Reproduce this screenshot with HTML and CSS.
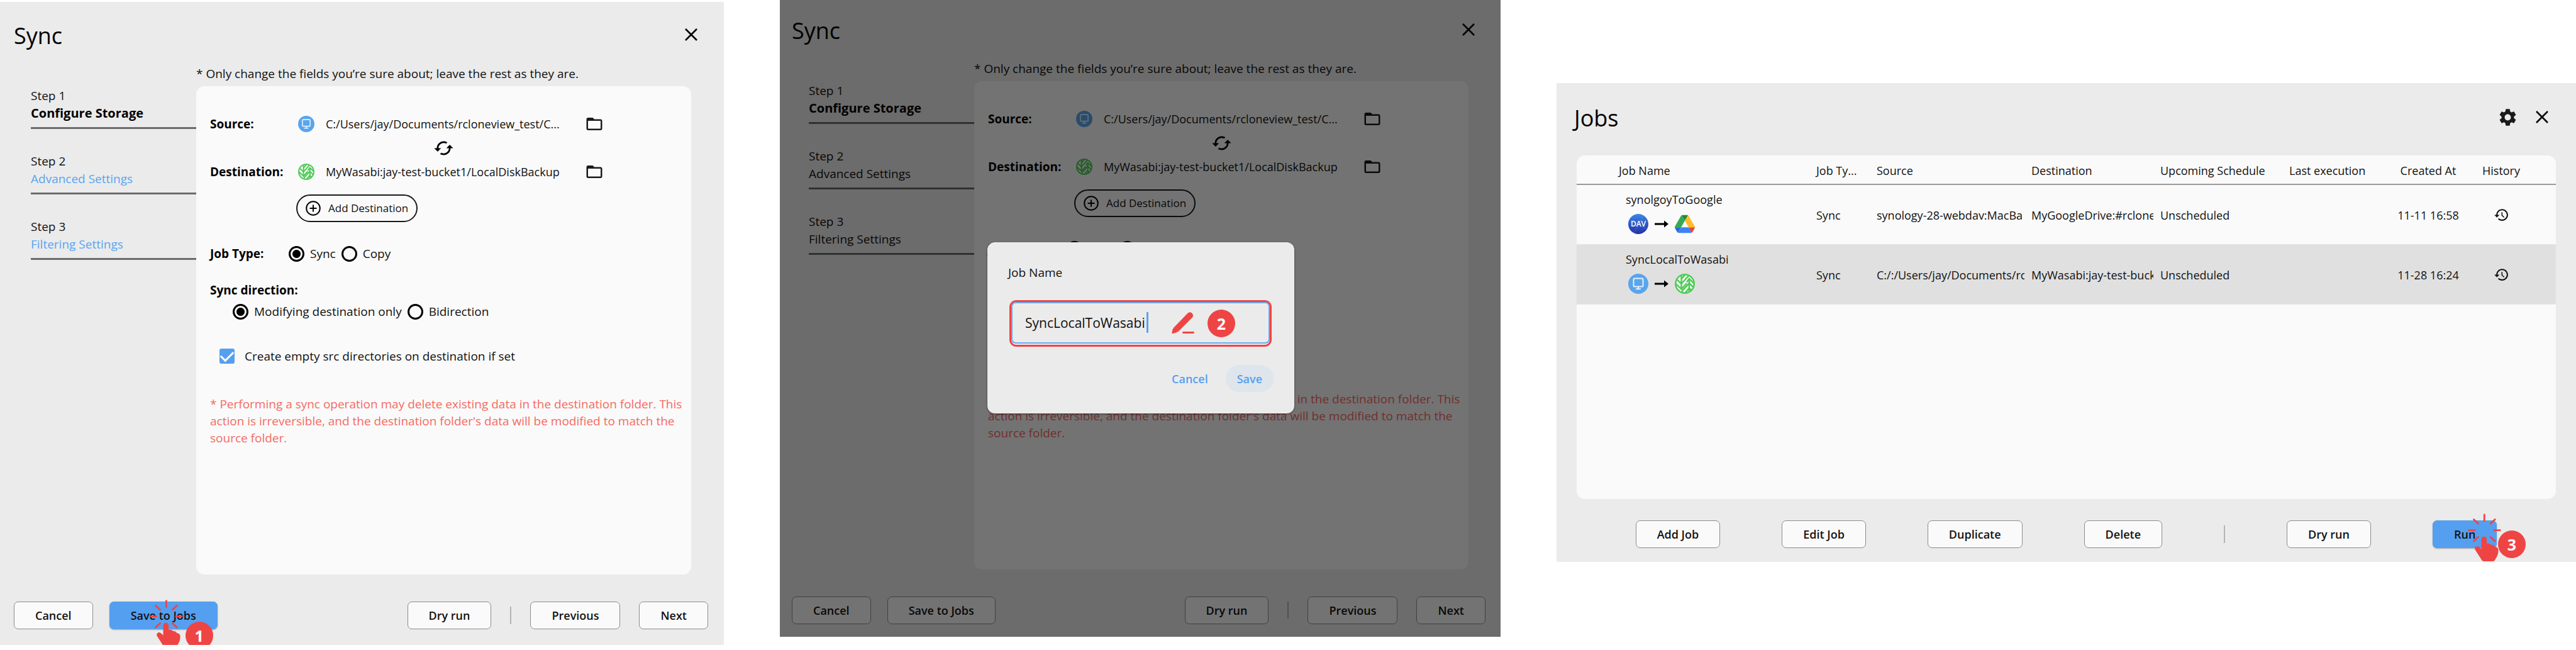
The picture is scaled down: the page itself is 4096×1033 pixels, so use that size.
FILE: index.html
```html
<!DOCTYPE html>
<html lang="en">
<head>
<meta charset="utf-8">
<title>Save and run a sync job</title>
<link rel="stylesheet" href="styles.css">
</head>
<body>
<svg class="sprite" aria-hidden="true">
  <defs>
    <linearGradient id="dav-fill" x1="0" y1="0" x2="0" y2="1">
      <stop offset="0" stop-color="#3f86e6"/>
      <stop offset="0.5" stop-color="#2b59c8"/>
      <stop offset="1" stop-color="#2a2fa8"/>
    </linearGradient>
    <clipPath id="leaf-clip"><circle cx="16" cy="16" r="14"/></clipPath>
  </defs>
  <symbol id="i-close" viewBox="0 0 20 20"><path d="M1 1l18 18M19 1L1 19" fill="none" stroke="#000" stroke-width="2.6"/></symbol>
  <symbol id="i-folder" viewBox="2 4 20 16"><path d="M20 6h-8l-2-2H4c-1.1 0-1.99.9-1.99 2L2 18c0 1.1.9 2 2 2h16c1.1 0 2-.9 2-2V8c0-1.1-.9-2-2-2zm0 12H4V8h16v10z" fill="#1a1a1a"/></symbol>
  <symbol id="i-swap" viewBox="0 0 24 24"><path d="M19 8l-4 4h3c0 3.31-2.69 6-6 6-1.01 0-1.97-.25-2.8-.7l-1.46 1.46C8.97 19.54 10.43 20 12 20c4.42 0 8-3.58 8-8h3l-4-4zM6 12c0-3.31 2.69-6 6-6 1.01 0 1.97.25 2.8.7l1.46-1.46C15.03 4.46 13.57 4 12 4c-4.42 0-8 3.58-8 8H1l4 4 4-4H6z"/></symbol>
  <symbol id="i-plus" viewBox="0 0 24 24"><g fill="none" stroke="#000" stroke-width="2"><circle cx="12" cy="12" r="10.8"/><path d="M12 6.500v11M6.500 12h11"/></g></symbol>
  <symbol id="i-computer" viewBox="0 0 32 32"><circle cx="16" cy="16" r="16" fill="#58a5ec"/><rect x="8.500" y="7.500" width="15" height="13" rx="1.500" fill="none" stroke="#e6f1fc" stroke-width="2"/><path d="M16 21v3M12 24.300h8" stroke="#e6f1fc" stroke-width="2" fill="none"/></symbol>
  <symbol id="i-wasabi" viewBox="0 0 32 32">
    <circle cx="16" cy="16" r="16" fill="#4fcb57"/>
    <g clip-path="url(#leaf-clip)">
      <circle cx="16" cy="16" r="13.500" fill="#fff"/>
      <g fill="none" stroke="#4fcb57" stroke-width="2.600">
        <path d="M10.500 1v24"/><path d="M1 7l9.500 9L24 1"/><path d="M1 15.500l9.500 9L19 15"/>
        <path d="M23 8v24"/><path d="M12 32V27l11-12 8 8"/><path d="M15 32l8-9 7 7"/><path d="M19 13.500l4-5.500 8 8"/><path d="M10.500 8.500L17 1M1 22l9 9"/>
      </g>
    </g>
  </symbol>
  <symbol id="i-drive" viewBox="0 0 87.300 78">
    <path d="m6.600 66.850 3.850 6.650c.8 1.400 1.950 2.500 3.300 3.300l13.750-23.800h-27.500c0 1.550.4 3.100 1.200 4.500z" fill="#2468dc"/>
    <path d="m43.650 25-13.750-23.800c-1.350.8-2.500 1.900-3.300 3.300l-25.400 44a9.060 9.060 0 0 0-1.200 4.500h27.500z" fill="#36a852"/>
    <path d="m73.550 76.800c1.350-.8 2.500-1.900 3.300-3.300l1.600-2.750 7.650-13.250c.8-1.400 1.200-2.950 1.200-4.500h-27.500l5.850 11.500z" fill="#ea4335"/>
    <path d="m43.650 25 13.750-23.800c-1.350-.8-2.900-1.200-4.500-1.200h-18.500c-1.600 0-3.150.45-4.500 1.200z" fill="#218a38"/>
    <path d="m59.800 53h-32.300l-13.750 23.800c1.350.8 2.900 1.200 4.500 1.200h50.800c1.600 0 3.150-.45 4.500-1.200z" fill="#3b82f6"/>
    <path d="m73.400 26.500-12.700-22c-.8-1.400-1.950-2.500-3.300-3.300l-13.750 23.800 16.150 28h27.450c0-1.550-.4-3.100-1.200-4.500z" fill="#fcbc2c"/>
  </symbol>
  <symbol id="i-arrow" viewBox="0 0 22 12"><path d="M0 6h16" stroke="#000" stroke-width="3" fill="none"/><path d="M15 .5L22 6l-7 5.500z"/></symbol>
  <symbol id="i-gear" viewBox="0 0 24 24"><path fill="#1a1a1a" d="M19.140 12.940c.04-.3.060-.61.060-.94 0-.32-.02-.64-.07-.94l2.030-1.580c.18-.14.23-.41.12-.61l-1.920-3.320c-.12-.22-.37-.29-.59-.22l-2.390.96c-.5-.38-1.030-.7-1.620-.94L14.400 2.810c-.04-.24-.24-.41-.48-.41h-3.840c-.24 0-.43.17-.47.41L9.250 5.350C8.660 5.590 8.120 5.920 7.630 6.290L5.240 5.330c-.22-.08-.47 0-.59.22L2.740 8.870c-.12.21-.08.47.12.61l2.030 1.580C4.840 11.360 4.800 11.690 4.800 12s.02.64.07.94l-2.030 1.580c-.18.14-.23.41-.12.61l1.920 3.320c.12.22.37.29.59.22l2.390-.96c.5.38 1.030.7 1.620.94l.36 2.540c.05.24.24.41.48.41h3.840c.24 0 .44-.17.47-.41l.36-2.540c.59-.24 1.130-.56 1.620-.94l2.390.96c.22.08.47 0 .59-.22l1.920-3.320c.12-.22.07-.47-.12-.61L19.140 12.940zM12 15.600c-1.980 0-3.600-1.620-3.600-3.600s1.620-3.600 3.600-3.600 3.600 1.620 3.600 3.600-1.620 3.600-3.600 3.600z"/></symbol>
  <symbol id="i-history" viewBox="0 0 24 24"><path d="M13 3c-4.970 0-9 4.030-9 9H1l3.890 3.890.07.14L9 12H6c0-3.870 3.130-7 7-7s7 3.130 7 7-3.130 7-7 7c-1.930 0-3.680-.79-4.940-2.060l-1.420 1.420C8.270 19.990 10.510 21 13 21c4.970 0 9-4.030 9-9s-4.030-9-9-9zm-1 5v5l3.600 3.400 1-1.100-3.100-2.900V8H12z" fill="#111"/></symbol>
  <symbol id="i-tap" viewBox="235 953 56 77">
    <path d="M263.300 955v10M238.500 979.600h9.500M278.800 979.600h9.500M246.500 962.500l7 6.500M280.200 962.500l-7 6.500M246.500 997l7-6.500M280.200 997l-7-6.500" fill="none" stroke="#ef4444" stroke-width="2.800" stroke-linecap="round"/>
    <path d="M258.500 994a4.300 4.300 0 0 1 8.600 0v7c3-.8 6 .3 7 2 3-.3 5.500 1 6 3 3 .3 5.500 2 5.500 5.500 0 5-1.500 9-3.500 12l-2 3.500q-1 2-3 2h-15q-2 0-3-2L248.500 1010.500c-1.500-4 3-7 6-4.500l4 3.500z" fill="#ef4444"/>
  </symbol>
  <symbol id="i-pencil" viewBox="0 0 36 35"><path d="M25.500 1.800a5 5 0 0 1 7.400 6.700L11 30.500Q6 34 .5 34.200 0 28.500 3.500 24.500z" fill="#ef4444"/><path d="M18.500 32.500h16" stroke="#ef4444" stroke-width="3" stroke-linecap="round"/></symbol>
</svg>

<main class="walkthrough">
  <section class="panel sync-panel">
    <header class="panel-head">
      <h1>Sync</h1>
      <button type="button" class="icon-btn" aria-label="Close"><svg class="close"><use href="#i-close"/></svg></button>
    </header>
    <div class="wizard">
      <nav class="steps">
        <div class="step current"><span>Step 1</span><strong>Configure Storage</strong></div>
        <div class="step"><span>Step 2</span><a href="#advanced">Advanced Settings</a></div>
        <div class="step"><span>Step 3</span><a href="#filtering">Filtering Settings</a></div>
      </nav>
      <div class="step-body">
        <p class="note">* Only change the fields you’re sure about; leave the rest as they are.</p>
        <form class="card config">
          <div class="endpoint"><b>Source:</b><svg class="remote"><use href="#i-computer"/></svg><span class="path">C:/Users/jay/Documents/rcloneview_test/C...</span><button type="button" class="folder-btn" aria-label="Browse source"><svg class="folder"><use href="#i-folder"/></svg></button></div>
          <div class="swap-row"><button type="button" class="swap-btn" aria-label="Swap source and destination"><svg class="swap"><use href="#i-swap"/></svg></button></div>
          <div class="endpoint"><b>Destination:</b><svg class="remote"><use href="#i-wasabi"/></svg><span class="path">MyWasabi:jay-test-bucket1/LocalDiskBackup</span><button type="button" class="folder-btn" aria-label="Browse destination"><svg class="folder"><use href="#i-folder"/></svg></button></div>
          <button type="button" class="add-btn"><svg class="plus"><use href="#i-plus"/></svg>Add Destination</button>
          <div class="choices job-type"><b>Job Type:</b><input type="radio" name="type-a" id="sync-a" checked><label for="sync-a">Sync</label><input type="radio" name="type-a" id="copy-a"><label for="copy-a">Copy</label></div>
          <b class="direction-title">Sync direction:</b>
          <div class="choices direction"><input type="radio" name="dir-a" id="one-a" checked><label for="one-a">Modifying destination only</label><input type="radio" name="dir-a" id="bi-a"><label for="bi-a">Bidirection</label></div>
          <div class="choices empty-dirs"><input type="checkbox" id="empty-a" checked><label for="empty-a">Create empty src directories on destination if set</label></div>
          <p class="warning">* Performing a sync operation may delete existing data in the destination folder. This action is irreversible, and the destination folder's data will be modified to match the source folder.</p>
        </form>
      </div>
    </div>
    <footer class="actions">
      <button type="button" class="btn">Cancel</button>
      <span class="marked">
        <button type="button" class="btn primary">Save to Jobs</button>
        <svg class="tap tap-save"><use href="#i-tap"/></svg>
        <span class="badge badge-save">1</span>
      </span>
      <div class="actions-end">
        <button type="button" class="btn">Dry run</button>
        <span class="divider"></span>
        <button type="button" class="btn">Previous</button>
        <button type="button" class="btn">Next</button>
      </div>
    </footer>
  </section>

  <section class="panel sync-panel dimmed">
    <header class="panel-head">
      <h1>Sync</h1>
      <button type="button" class="icon-btn" aria-label="Close"><svg class="close"><use href="#i-close"/></svg></button>
    </header>
    <div class="wizard">
      <nav class="steps">
        <div class="step current"><span>Step 1</span><strong>Configure Storage</strong></div>
        <div class="step"><span>Step 2</span><a href="#advanced">Advanced Settings</a></div>
        <div class="step"><span>Step 3</span><a href="#filtering">Filtering Settings</a></div>
      </nav>
      <div class="step-body">
        <p class="note">* Only change the fields you’re sure about; leave the rest as they are.</p>
        <form class="card config">
          <div class="endpoint"><b>Source:</b><svg class="remote"><use href="#i-computer"/></svg><span class="path">C:/Users/jay/Documents/rcloneview_test/C...</span><button type="button" class="folder-btn" aria-label="Browse source"><svg class="folder"><use href="#i-folder"/></svg></button></div>
          <div class="swap-row"><button type="button" class="swap-btn" aria-label="Swap source and destination"><svg class="swap"><use href="#i-swap"/></svg></button></div>
          <div class="endpoint"><b>Destination:</b><svg class="remote"><use href="#i-wasabi"/></svg><span class="path">MyWasabi:jay-test-bucket1/LocalDiskBackup</span><button type="button" class="folder-btn" aria-label="Browse destination"><svg class="folder"><use href="#i-folder"/></svg></button></div>
          <button type="button" class="add-btn"><svg class="plus"><use href="#i-plus"/></svg>Add Destination</button>
          <div class="choices job-type"><b>Job Type:</b><input type="radio" name="type-b" id="sync-b" checked><label for="sync-b">Sync</label><input type="radio" name="type-b" id="copy-b"><label for="copy-b">Copy</label></div>
          <b class="direction-title">Sync direction:</b>
          <div class="choices direction"><input type="radio" name="dir-b" id="one-b" checked><label for="one-b">Modifying destination only</label><input type="radio" name="dir-b" id="bi-b"><label for="bi-b">Bidirection</label></div>
          <div class="choices empty-dirs"><input type="checkbox" id="empty-b" checked><label for="empty-b">Create empty src directories on destination if set</label></div>
          <p class="warning">* Performing a sync operation may delete existing data in the destination folder. This action is irreversible, and the destination folder's data will be modified to match the source folder.</p>
        </form>
      </div>
    </div>
    <footer class="actions">
      <button type="button" class="btn">Cancel</button>
      <button type="button" class="btn">Save to Jobs</button>
      <div class="actions-end">
        <button type="button" class="btn">Dry run</button>
        <span class="divider"></span>
        <button type="button" class="btn">Previous</button>
        <button type="button" class="btn">Next</button>
      </div>
    </footer>
    <div class="scrim"></div>
    <div class="modal" role="dialog" aria-label="Job Name">
      <label for="job-name">Job Name</label>
      <div class="name-field">
        <input type="text" id="job-name" value="SyncLocalToWasabi">
        <span class="caret"></span>
        <svg class="pencil"><use href="#i-pencil"/></svg>
        <span class="badge badge-name">2</span>
      </div>
      <div class="modal-actions">
        <button type="button" class="text-btn">Cancel</button>
        <button type="button" class="text-btn filled">Save</button>
      </div>
    </div>
  </section>

  <section class="panel jobs-panel">
    <header class="panel-head">
      <h1>Jobs</h1>
      <div class="head-tools">
        <button type="button" class="icon-btn" aria-label="Settings"><svg class="gear"><use href="#i-gear"/></svg></button>
        <button type="button" class="icon-btn" aria-label="Close"><svg class="close"><use href="#i-close"/></svg></button>
      </div>
    </header>
    <div class="card jobs-card">
      <table>
        <colgroup><col><col class="c-type"><col class="c-source"><col class="c-dest"><col class="c-next"><col class="c-last"><col class="c-created"><col class="c-history"></colgroup>
        <thead>
          <tr><th class="name">Job Name</th><th>Job Ty...</th><th>Source</th><th>Destination</th><th>Upcoming Schedule</th><th>Last execution</th><th class="mid">Created At</th><th class="mid history">History</th></tr>
        </thead>
        <tbody>
          <tr>
            <td class="name"><div class="job">synolgoyToGoogle<span class="route"><svg class="mark" viewBox="0 0 32 32"><circle cx="16" cy="16" r="16" fill="url(#dav-fill)"/><path d="M2 10L30 24M24 2L9 31" stroke="#6f9be8" stroke-opacity=".35" fill="none"/><text x="16" y="20" text-anchor="middle" class="dav-text">DAV</text></svg><svg class="arrow"><use href="#i-arrow"/></svg><svg class="mark"><use href="#i-drive"/></svg></span></div></td>
            <td>Sync</td>
            <td><div class="clip">synology-28-webdav:MacBa</div></td>
            <td><div class="clip">MyGoogleDrive:#rclone</div></td>
            <td>Unscheduled</td><td></td><td class="mid">11-11 16:58</td>
            <td class="mid history"><button type="button" class="history-btn" aria-label="History"><svg class="clock"><use href="#i-history"/></svg></button></td>
          </tr>
          <tr class="selected">
            <td class="name"><div class="job">SyncLocalToWasabi<span class="route"><svg class="mark"><use href="#i-computer"/></svg><svg class="arrow"><use href="#i-arrow"/></svg><svg class="mark"><use href="#i-wasabi"/></svg></span></div></td>
            <td>Sync</td>
            <td><div class="clip">C:/:/Users/jay/Documents/rc</div></td>
            <td><div class="clip">MyWasabi:jay-test-buck</div></td>
            <td>Unscheduled</td><td></td><td class="mid">11-28 16:24</td>
            <td class="mid history"><button type="button" class="history-btn" aria-label="History"><svg class="clock"><use href="#i-history"/></svg></button></td>
          </tr>
        </tbody>
      </table>
    </div>
    <footer class="job-actions">
      <button type="button" class="btn">Add Job</button>
      <button type="button" class="btn">Edit Job</button>
      <button type="button" class="btn">Duplicate</button>
      <button type="button" class="btn">Delete</button>
      <span class="divider"></span>
      <button type="button" class="btn">Dry run</button>
      <span class="marked">
        <button type="button" class="btn primary">Run</button>
        <svg class="tap tap-run"><use href="#i-tap"/></svg>
        <span class="badge badge-run">3</span>
      </span>
    </footer>
  </section>
</main>
</body>
</html>
```
FILE: styles.css
```css
* { box-sizing: border-box; }

body {
  margin: 0;
  background: #fff;
  color: #111;
  font: 19px/28px "Open Sans", "Noto Sans", sans-serif;
}

h1, p { margin: 0; font-weight: 400; }
button { margin: 0; padding: 0; border: 0; background: none; color: inherit; font: inherit; cursor: pointer; }
svg { display: block; flex: none; }
b { font-weight: 700; color: #000; }

.sprite { position: absolute; width: 0; height: 0; }
.dav-text { font: 600 12px "Open Sans", sans-serif; fill: #fff; }

.walkthrough {
  display: grid;
  grid-template-columns: 1151fr 1146fr 1621fr;
  gap: 89px;
  align-items: start;
}

/* Panels */
.panel { position: relative; background: #ebebeb; }
.sync-panel { margin-top: 3px; padding: 30px 25px 25px 22px; }
.sync-panel.dimmed { margin-top: 0; padding: 25px 24px 20px 19px; }
.jobs-panel { margin-top: 132px; padding: 32px 32px 22px; }

.panel-head { display: flex; justify-content: space-between; align-items: flex-start; margin-bottom: 24px; }
.sync-panel .panel-head { padding-right: 5px; }
.jobs-panel .panel-head { margin-bottom: 35px; }
.jobs-panel h1 { margin-left: -4px; }
h1 { font-size: 36px; line-height: 48px; color: #000; }

.head-tools { display: flex; gap: 11px; }
.icon-btn { display: grid; place-items: center; width: 44px; height: 44px; }
.close { width: 20px; height: 20px; }
.gear { width: 33px; height: 33px; }

.card { background: #fafafa; border-radius: 13px; }

/* Wizard */
.wizard { display: grid; grid-template-columns: 290px 1fr; padding-right: 27px; }
.steps { padding: 33px 0 0 27px; }
.step { display: flex; flex-direction: column; margin-bottom: 37px; padding-bottom: 8px; border-bottom: 3px solid #6b6b6b; }
.step strong { font-size: 20px; color: #000; }
.step a { color: #5aa4f0; text-decoration: none; }
.dimmed .step a { color: #111; }

.note { margin-bottom: 8px; line-height: 24px; }
.config { min-height: 776px; padding: 46px 4px 20px 22px; }

.endpoint { display: grid; grid-template-columns: 140px 44px 414px 26px; align-items: center; height: 28px; }
.remote { width: 26px; height: 26px; }
.path { font-size: 18px; white-space: nowrap; }
.folder { width: 26px; height: 20px; }
.swap-row { display: flex; justify-content: center; align-items: center; width: 374px; height: 48px; margin-left: 184px; }
.swap { width: 33px; height: 33px; }

.add-btn {
  display: flex;
  align-items: center;
  gap: 12px;
  height: 44px;
  margin: 22px 0 0 137px;
  padding: 0 13px;
  border: 2px solid #1a1a1a;
  border-radius: 22px;
  font-size: 17px;
}
.plus { width: 24px; height: 24px; }

.choices { display: flex; align-items: center; height: 28px; }
.choices label { margin-left: 9px; }
.choices label + input { margin-left: 9px; }
.job-type { margin-top: 36px; }
.job-type b { width: 125px; }
.direction-title { display: block; margin-top: 30px; }
.direction { margin: 6px 0 0 36px; }
.empty-dirs { margin: 43px 0 0 15px; }
.empty-dirs label { margin-left: 16px; }

input[type="radio"] {
  appearance: none;
  width: 25px;
  height: 25px;
  margin: 0;
  border: 3px solid #000;
  border-radius: 50%;
}
input[type="radio"]:checked { background: radial-gradient(circle, #000 6px, transparent 7px); }

input[type="checkbox"] {
  appearance: none;
  display: grid;
  place-items: center;
  width: 24px;
  height: 24px;
  margin: 0;
  border-radius: 3px;
  background: #559ff0;
}
input[type="checkbox"]::after {
  content: "";
  width: 17px;
  height: 9px;
  margin-top: -5px;
  border: solid #fff;
  border-width: 0 0 3px 3px;
  transform: rotate(-45deg);
}

.warning { margin-top: 49px; line-height: 27px; color: #f56a62; }

/* Buttons */
.btn {
  height: 44px;
  padding: 0 33px;
  border: 1px solid #8c8c8c;
  border-radius: 7px;
  background: #fafafa;
  color: #111;
  font-size: 18px;
  font-weight: 600;
  white-space: nowrap;
}
.btn.primary { border-color: #559ff0; background: #559ff0; box-shadow: 0 1px 2px rgba(0, 0, 0, .3); }

.actions { display: flex; gap: 26px; margin-top: 43px; }
.actions-end { display: flex; align-items: center; gap: 30px; margin-left: auto; }
.divider { width: 2px; height: 28px; background: #b4b4b4; }
.job-actions { display: flex; justify-content: center; align-items: center; gap: 98px; margin-top: 34px; }

/* Tap markers and numbered badges */
.marked { position: relative; display: flex; }
.tap { position: absolute; width: 56px; height: 77px; }
.tap-save { left: 62px; top: -3px; }
.tap-run { left: 54px; top: -11px; }
.badge {
  position: absolute;
  width: 44px;
  height: 44px;
  border-radius: 50%;
  background: #ef4444;
  color: #fff;
  font: 700 25px/44px "Noto Sans", sans-serif;
  text-align: center;
}
.badge-save { left: 121px; top: 32px; }
.badge-run { left: 104px; top: 16px; }
.badge-name { left: 312px; top: 12px; }

/* Job name dialog */
.scrim { position: absolute; inset: 0; background: rgba(0, 0, 0, .54); }
.modal {
  position: absolute;
  left: 330px;
  top: 385px;
  width: 488px;
  padding: 34px 33px;
  border-radius: 12px;
  background: #ebebeb;
  box-shadow: 0 1px 3px rgba(0, 0, 0, .5);
}
.modal label { display: block; }
.name-field {
  position: relative;
  margin: 30px 3px 29px 2px;
  padding-bottom: 2px;
  border: 3px solid #ef4444;
  border-radius: 11px;
}
.name-field input {
  display: block;
  width: 100%;
  height: 66px;
  padding: 0 20px;
  border: 2px solid #6aaaf0;
  border-radius: 7px;
  outline: 0;
  background: none;
  color: #111;
  font: 21px/28px "Open Sans", "Noto Sans", sans-serif;
}
.caret { position: absolute; left: 215px; top: 16px; width: 3px; height: 33px; background: #5aa4f0; }
.pencil { position: absolute; left: 255px; top: 16px; width: 36px; height: 35px; }
.modal-actions { display: flex; justify-content: flex-end; gap: 10px; }
.text-btn { height: 43px; padding: 0 18px; border-radius: 22px; color: #559ff0; font-size: 18px; font-weight: 600; }
.text-btn.filled { background: #dee5ec; }

/* Jobs table */
.jobs-card { min-height: 546px; overflow: hidden; }
table { width: 100%; table-layout: fixed; border-collapse: collapse; font-size: 18px; line-height: 26px; }
.c-type { width: 96px; }
.c-source { width: 246px; }
.c-dest { width: 205px; }
.c-next { width: 205px; }
.c-last { width: 164px; }
.c-created { width: 114px; }
.c-history { width: 146px; }
th, td { padding: 0; text-align: left; font-weight: 400; white-space: nowrap; }
th { height: 46px; padding-top: 3px; border-bottom: 2px solid #999; }
td { height: 95px; padding-top: 2px; border-bottom: 1px solid #e4e4e4; }
th.name { padding-left: 67px; }
td.name { padding: 0 0 0 78px; }
.mid { text-align: center; }
.history { padding-right: 28px; }
.selected { background: #e0e0e0; }
.clip { margin-right: 11px; overflow: hidden; }
.route { display: flex; align-items: center; gap: 10px; margin: 10px 0 0 4px; }
.job { padding-bottom: 5px; }
.mark { width: 32px; height: 32px; }
.arrow { width: 22px; height: 12px; }
.history-btn { display: block; margin: 0 auto; }
.clock { width: 25px; height: 25px; }
```
